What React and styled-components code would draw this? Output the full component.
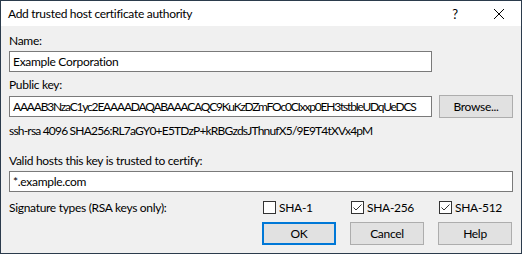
import React from "react";
import styled, { createGlobalStyle } from "styled-components";

const Global = createGlobalStyle`
    html, body {
        margin: 0;
        padding: 0;
        background: #f0f0f0;
    }
    * {
        box-sizing: border-box;
    }
`

const Window = styled.div`
    width: 522px;
    height: 254px;
    border: 1px solid #2b3b4c;
    background: #f0f0f0;
    font-family: "Segoe UI", Lato, "Liberation Sans", sans-serif;
    font-size: 12px;
    letter-spacing: -0.3px;
    color: #000;
    display: flex;
    flex-direction: column;
`

const TitleBar = styled.div`
    height: 25px;
    background: #fff;
    display: flex;
    align-items: center;
    padding-left: 7px;
`

const TitleText = styled.div`
    flex: 1;
    font-size: 12px;
`

const TitleButton = styled.div`
    width: 44px;
    height: 25px;
    display: flex;
    align-items: center;
    justify-content: center;
    font-size: 13px;
`

const Body = styled.div`
    flex: 1;
    display: flex;
    flex-direction: column;
    padding: 7px 8px 0 8px;
`

const Label = styled.div`
    line-height: 15px;
    height: 15px;
    white-space: nowrap;
    margin-top: ${(p) => p.top || 0}px;
    letter-spacing: ${(p) => p.tight ? "-0.8px" : "inherit"};
`

const Input = styled.div`
    height: 21px;
    width: ${(p) => p.width ? p.width + "px" : "auto"};
    margin-top: ${(p) => p.top || 0}px;
    background: #fff;
    border: 1px solid #7a7a7a;
    padding: 0 3px;
    line-height: 19px;
    white-space: nowrap;
    overflow: hidden;
    letter-spacing: ${(p) => p.tight ? "-1.2px" : "inherit"};
`

const Row = styled.div`
    display: flex;
    align-items: center;
    margin-top: ${(p) => p.top || 0}px;
`

const Button = styled.div`
    width: 74px;
    height: 23px;
    flex-shrink: 0;
    display: flex;
    align-items: center;
    justify-content: center;
    background: #e1e1e1;
    border: ${(p) => p.primary ? "2px solid #0078d7" : "1px solid #adadad"};
    margin-left: ${(p) => p.left || 0}px;
`

const CheckRow = styled.div`
    display: flex;
    align-items: center;
    margin-top: ${(p) => p.top || 0}px;
    height: 15px;
`

const Spacer = styled.div`
    flex: 1;
`

const Check = styled.label`
    width: 74px;
    display: flex;
    align-items: center;
    margin-left: ${(p) => p.left || 0}px;
`

const Box = styled.span`
    width: 13px;
    height: 13px;
    border: 1px solid #333;
    background: #fff;
    margin-right: 3px;
    display: flex;
    align-items: center;
    justify-content: center;
`

const ButtonRow = styled.div`
    display: flex;
    justify-content: flex-end;
    margin-top: 7px;
    padding-right: 1px;
`

function CheckBox({ checked, label, left }) {
    return (
        <Check left={left}>
            <Box>
                {checked && (
                    <svg width="11" height="11" viewBox="0 0 11 11">
                        <path d="M1.5 5.5 L4 8 L9.5 2.5" fill="none" stroke="#333" strokeWidth="1" />
                    </svg>
                )}
            </Box>
            {label}
        </Check>
    )
}

export default function App() {
    return (
        <Window>
            <Global />
            <TitleBar>
                <TitleText>Add trusted host certificate authority</TitleText>
                <TitleButton>?</TitleButton>
                <TitleButton>
                    <svg width="10" height="10" viewBox="0 0 10 10">
                        <path d="M0 0 L10 10 M10 0 L0 10" stroke="#000" strokeWidth="1" />
                    </svg>
                </TitleButton>
            </TitleBar>
            <Body>
                <Label>Name:</Label>
                <Input width={423} top={3}>Example Corporation</Input>
                <Label top={5}>Public key:</Label>
                <Row top={3}>
                    <Input width={423} tight>AAAAB3NzaC1yc2EAAAADAQABAAACAQC9KuKzDZmFOc0CIxxp0EH3tstbIeUDqUeDCS</Input>
                    <Button left={7}>Browse...</Button>
                </Row>
                <Label top={5} tight>ssh-rsa 4096 SHA256:RL7aGY0+E5TDzP+kRBGzdsJThnufX5/9E9T4tXVx4pM</Label>
                <Label top={15}>Valid hosts this key is trusted to certify:</Label>
                <Input top={3}>*.example.com</Input>
                <CheckRow top={8}>
                    Signature types (RSA keys only):
                    <Spacer />
                    <CheckBox label="SHA-1" />
                    <CheckBox label="SHA-256" checked left={14} />
                    <CheckBox label="SHA-512" checked left={14} />
                </CheckRow>
                <ButtonRow>
                    <Button primary>OK</Button>
                    <Button left={14}>Cancel</Button>
                    <Button left={14}>Help</Button>
                </ButtonRow>
            </Body>
        </Window>
    )
}
